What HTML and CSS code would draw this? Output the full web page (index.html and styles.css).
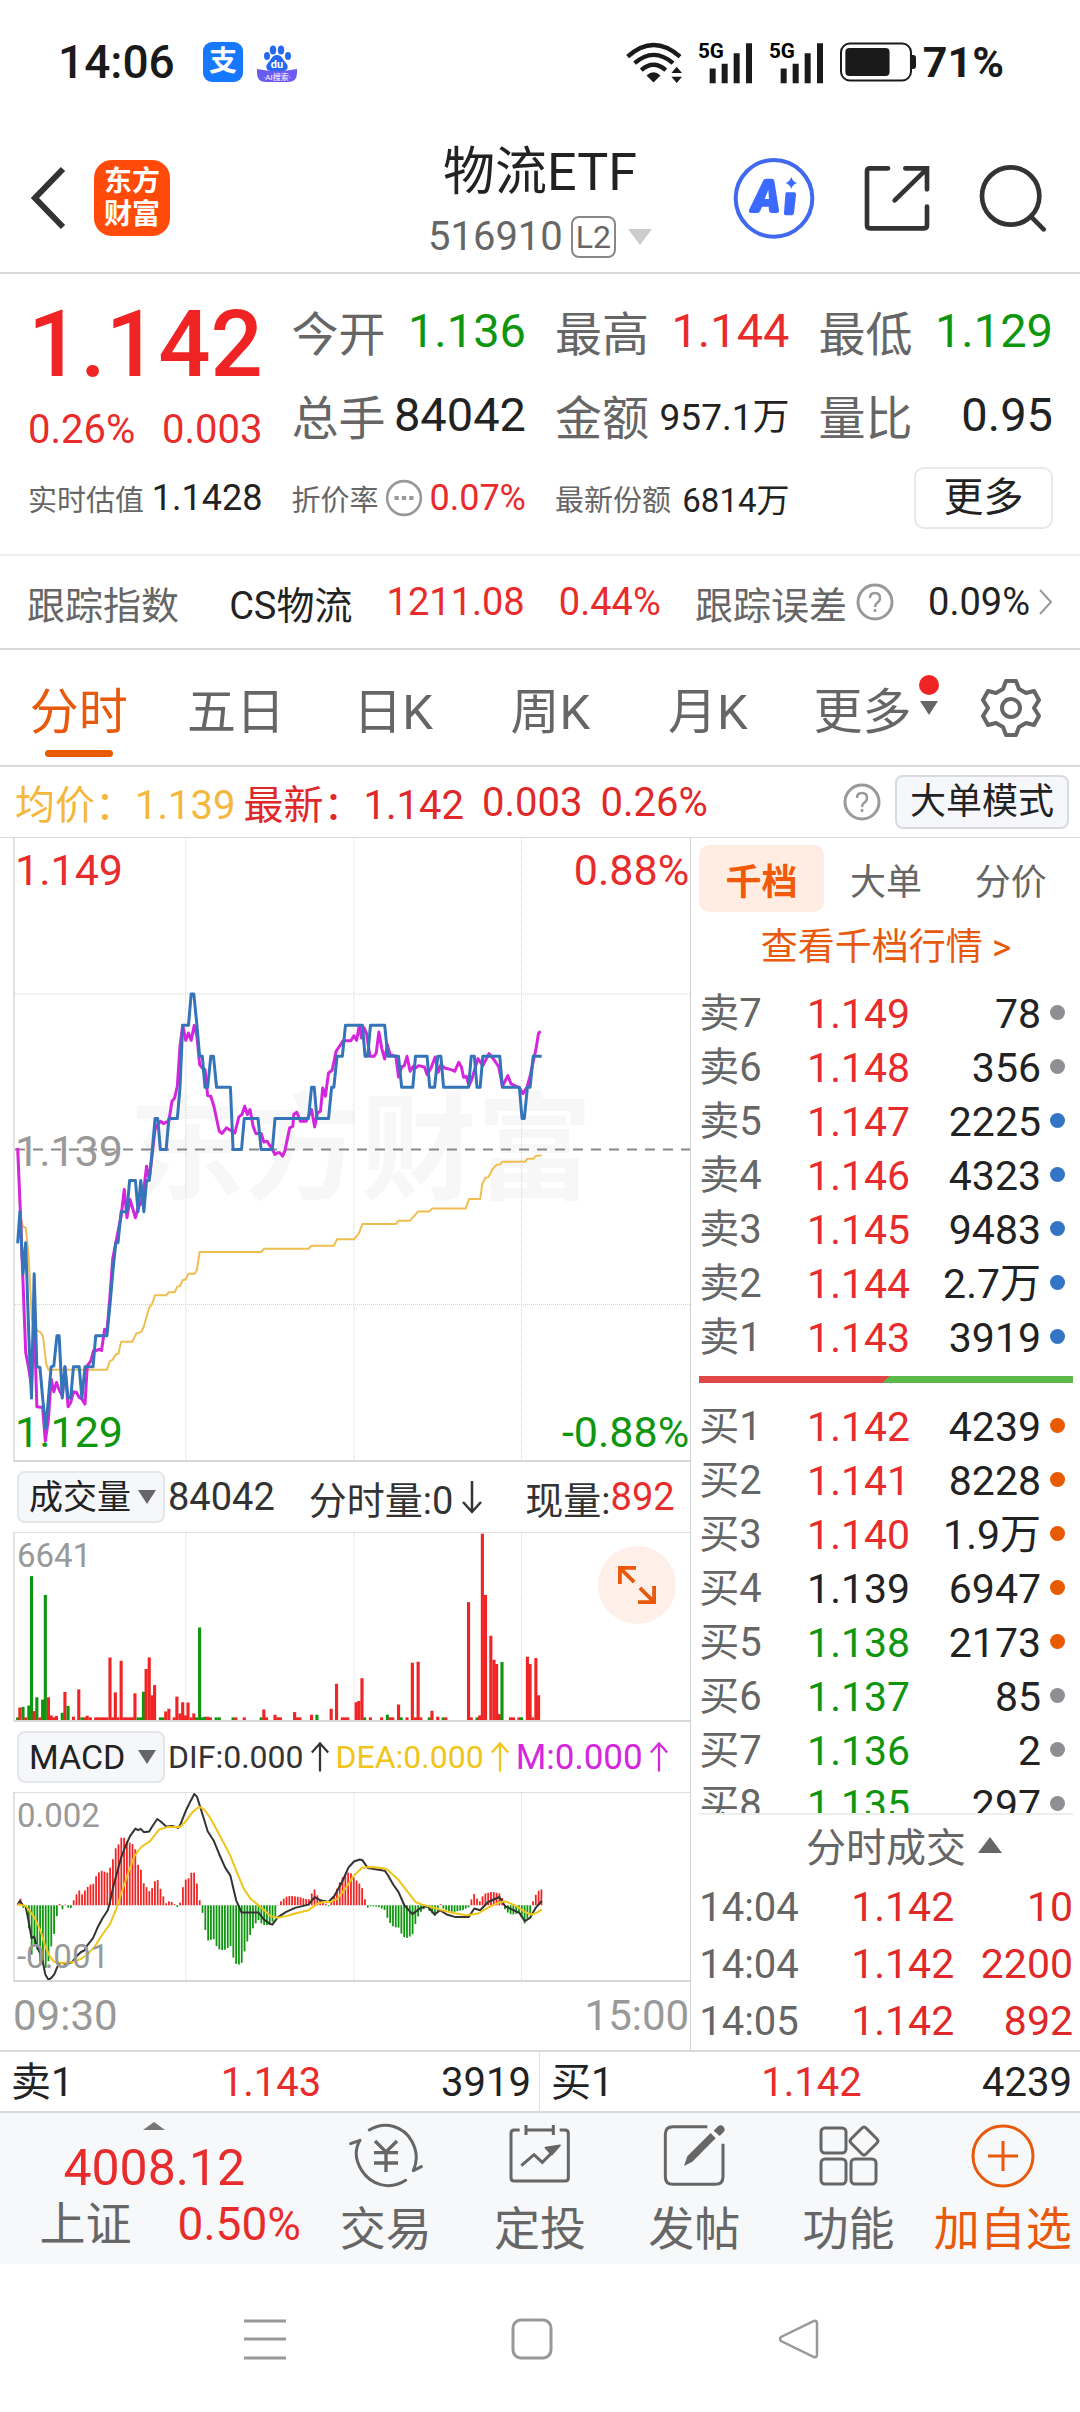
FILE: index.html
```html
<!DOCTYPE html>
<html lang="zh-CN">
<head>
    <meta charset="UTF-8">
    <meta name="viewport" content="width=device-width, initial-scale=1.0">
    <title>物流ETF 516910</title>
    <link rel="stylesheet" href="styles.css">
</head>
<body>
    <div class="status">
        <span class="clock">14:06</span>
        <svg class="app-icon" viewBox="0 0 40 40">
            <rect width="40" height="40" rx="9" fill="#1677ff"/>
            <text x="20" y="29" text-anchor="middle" class="alipay-text">支</text>
        </svg>
        <svg class="app-icon" viewBox="0 0 40 40">
            <g fill="#2468f2">
                <ellipse cx="16" cy="8" rx="3.2" ry="4.5"/>
                <ellipse cx="24" cy="8" rx="3.2" ry="4.5"/>
                <ellipse cx="10" cy="14" rx="3" ry="4"/>
                <ellipse cx="31" cy="14" rx="3" ry="4"/>
                <path d="M20 13c5 0 6 5 9 8s2 8-3 8H14c-5 0-6-5-3-8s4-8 9-8z"/>
            </g>
            <path d="M0 27q20 4 40 0v4q0 9-9 9H9q-9 0-9-9z" fill="#6a5cf0"/>
            <text x="20" y="26" text-anchor="middle" class="du-text">du</text>
            <text x="20" y="38" text-anchor="middle" class="ai-text">·AI搜索·</text>
        </svg>
        <div class="status-right">
            <svg class="wifi" viewBox="40 30 178 128">
                <g fill="none" stroke="#1a1a1a" stroke-width="13">
                    <path d="M48 76Q126 6 206 76"/>
                    <path d="M69 96Q126 46 185 96"/>
                    <path d="M89 117Q126 85 163 117"/>
                </g>
                <path d="M105 133Q126 114 147 133L126 154zM180 126l16-19 16 19zM180 137h32l-16 19z" fill="#1a1a1a"/>
            </svg>
            <svg class="signal" viewBox="260 30 165 128">
                <text x="260" y="80" class="net-text">5G</text>
                <path d="M304 112v44M340 98v58M376 66v90M413 36v120" stroke="#1a1a1a" stroke-width="18"/>
            </svg>
            <svg class="signal" viewBox="260 30 165 128">
                <text x="260" y="80" class="net-text">5G</text>
                <path d="M304 112v44M340 98v58M376 66v90M413 36v120" stroke="#1a1a1a" stroke-width="18"/>
            </svg>
            <svg class="battery" viewBox="692 40 230 118">
                <rect x="695" y="44" width="209" height="110" rx="26" fill="none" stroke="#1a1a1a" stroke-width="6"/>
                <rect x="708" y="57" width="132" height="84" rx="12" fill="#1a1a1a"/>
                <path d="M906 78h5q8 0 8 9v24q0 9-8 9h-5z" fill="#1a1a1a"/>
            </svg>
            <span class="percent">71%</span>
        </div>
    </div>

    <header class="header">
        <div class="header-side">
            <button class="icon-btn" aria-label="返回">
                <svg width="36" height="64" viewBox="0 0 36 64"><path d="M32 3L4 32l28 29" fill="none" stroke="#333" stroke-width="6"/></svg>
            </button>
            <a class="logo" href="#">东方<br>财富</a>
        </div>
        <div class="title">
            <h1>物流ETF</h1>
            <button class="code">516910<span class="level">L2</span><span class="code-arrow"></span></button>
        </div>
        <div class="header-side header-tools">
            <button class="icon-btn" aria-label="AI">
                <svg width="82" height="82" viewBox="372 380 246 246">
                    <circle cx="495" cy="504" r="115" fill="none" stroke="#4069f0" stroke-width="12"/>
                    <path d="M462 452q2-7 10-7h16q7 0 8 7l14 88q1 8-7 8h-15q-7 0-8-7l-1-12h-20l-5 12q-3 7-9 7h-18q-10 0-7-9zM478 479l-11 27h13zM533 486h22q7 0 6 7l-6 55q-1 7-8 7h-16q-7 0-6-7l4-55q0-7 4-7zM547 439q3 15 18 19-15 4-18 18-4-14-18-18 14-4 18-19z" fill="#3a6aff" fill-rule="evenodd"/>
                </svg>
            </button>
            <button class="icon-btn" aria-label="分享">
                <svg width="66" height="66" viewBox="760 404 198 198">
                    <path d="M832 414h-54q-9 0-9 9v162q0 9 9 9h162q9 0 9-9v-56M884 414h65v63M944 420l-92 90" fill="none" stroke="#333" stroke-width="14" stroke-linecap="round"/>
                </svg>
            </button>
            <button class="icon-btn" aria-label="搜索">
                <svg width="68" height="68" viewBox="1108 398 204 204">
                    <circle cx="1203" cy="494" r="86" fill="none" stroke="#333" stroke-width="14"/>
                    <path d="M1264 556l38 38" stroke="#333" stroke-width="14" stroke-linecap="round"/>
                </svg>
            </button>
        </div>
    </header>

    <section class="quote">
        <div class="last">
            <div class="last-price">1.142</div>
            <div class="last-change"><span>0.26%</span><span>0.003</span></div>
        </div>
        <div class="cell"><span class="label">今开</span><span class="down">1.136</span></div>
        <div class="cell"><span class="label">最高</span><span class="up">1.144</span></div>
        <div class="cell"><span class="label">最低</span><span class="down">1.129</span></div>
        <div class="cell"><span class="label">总手</span><span>84042</span></div>
        <div class="cell"><span class="label">金额</span><span class="amount">957.1万</span></div>
        <div class="cell"><span class="label">量比</span><span>0.95</span></div>
        <div class="cell small"><span class="label">实时估值</span><span>1.1428</span></div>
        <div class="cell small">
            <span class="label">折价率</span>
            <svg class="hint" viewBox="0 0 36 36"><circle cx="18" cy="18" r="16" fill="none" stroke="#999" stroke-width="2.5"/><path d="M9 18h4M16 18h4M23 18h4" stroke="#999" stroke-width="4"/></svg>
            <span class="up">0.07%</span>
        </div>
        <div class="cell small"><span class="label">最新份额</span><span class="share">6814万</span></div>
        <div class="cell cell-more"><button class="more-btn">更多</button></div>
    </section>

    <a class="track" href="#">
        <span class="label track-name">跟踪指数</span>
        <span>CS物流</span>
        <span class="up">1211.08</span>
        <span class="up">0.44%</span>
        <span class="label track-label">跟踪误差
            <svg class="hint" viewBox="0 0 38 38"><circle cx="19" cy="19" r="17" fill="none" stroke="#999" stroke-width="3"/><path d="M14 15q0-5 5-5t5 5q0 3-3 5-2 1.500-2 4M19 26v3" fill="none" stroke="#999" stroke-width="2.500"/></svg>
        </span>
        <span class="track-label">0.09%
            <svg width="14" height="26" viewBox="0 0 14 26"><path d="M1 1l11 12L1 25" fill="none" stroke="#999" stroke-width="2"/></svg>
        </span>
    </a>

    <nav class="tabs">
        <button class="tab active">分时</button>
        <button class="tab">五日</button>
        <button class="tab">日K</button>
        <button class="tab">周K</button>
        <button class="tab">月K</button>
        <button class="tab tab-more">更多<span class="tab-arrow"></span></button>
        <button class="tab" aria-label="设置">
            <svg width="60" height="60" viewBox="0 0 60 60">
                <path d="M25 3h10l3 8 7 4 8-2 5 9-5 8 5 8-5 9-8-2-7 4-3 8H25l-3-8-7-4-8 2-5-9 5-8-5-8 5-9 8 2 7-4z" fill="none" stroke="#666" stroke-width="4" stroke-linejoin="round"/>
                <circle cx="30" cy="30" r="9" fill="none" stroke="#666" stroke-width="4"/>
            </svg>
        </button>
    </nav>

    <div class="info">
        <span class="avg">均价：1.139</span>
        <span class="now">最新：1.142</span>
        <span class="now-change">0.003</span>
        <span class="now-change">0.26%</span>
        <svg class="hint info-hint" viewBox="0 0 38 38"><circle cx="19" cy="19" r="17" fill="none" stroke="#999" stroke-width="3"/><path d="M14 15q0-5 5-5t5 5q0 3-3 5-2 1.500-2 4M19 26v3" fill="none" stroke="#999" stroke-width="2.500"/></svg>
        <button class="mode-btn">大单模式</button>
    </div>

    <main class="main">
        <section class="charts">
            <div class="chart chart-price">
                <span class="watermark">东方财富</span>
                <svg viewBox="32 54 1514 1869" preserveAspectRatio="none">
                    <path class="grid" d="M415 54v1869M792 54v1869M1168 54v1869M32 523h1514M32 1456h1514"/>
                    <path class="middle" d="M32 990h1514"/>
                    <polyline class="line avg-line" points="38,990 44,1190 50,1222 56,1225 62,1300 70,1500 81,1533 90,1540 95,1552 102,1635 107,1652 238,1652 245,1625 251,1622 258,1606 264,1604 270,1568 295,1568 304,1543 315,1538 320,1525 333,1465 339,1455 346,1428 371,1428 377,1419 390,1419 396,1402 402,1400 408,1383 415,1380 421,1363 435,1363 440,1352 446,1298 584,1298 591,1288 690,1288 697,1279 747,1279 754,1260 792,1260 803,1242 811,1214 886,1214 892,1204 918,1204 936,1176 961,1176 968,1167 1043,1167 1050,1139 1075,1139 1080,1092 1087,1075 1094,1073 1102,1050 1112,1036 1119,1035 1125,1027 1175,1027 1181,1018 1194,1018 1200,1009 1213,1008"/>
                    <polyline class="line index-line" points="38,985 44,1177 50,1390 56,1600 62,1643 69,1700 75,1490 81,1763 94,1765 100,1866 107,1800 113,1680 119,1718 125,1690 132,1715 138,1730 144,1643 151,1763 157,1750 163,1718 170,1720 176,1735 182,1740 189,1755 194,1640 202,1625 208,1595 214,1595 220,1590 226,1594 233,1530 238,1540 245,1430 251,1320 258,1270 264,1230 270,1190 277,1110 283,1195 290,1140 302,1195 308,1165 315,1150 321,1110 327,1040 333,1080 340,1000 346,930 352,915 358,905 365,912 371,908 377,905 384,845 390,835 396,800 402,680 408,617 415,662 421,640 427,662 434,617 440,650 446,735 452,745 458,750 464,828 471,830 478,860 490,935 496,942 506,925 515,932 525,940 534,892 541,885 547,860 553,885 559,870 566,920 572,942 584,942 590,968 597,965 609,990 615,1005 620,1000 626,1000 632,1010 637,995 648,925 655,920 657,885 664,878 672,905 685,905 697,870 704,922 710,880 717,875 722,805 728,830 735,760 743,752 752,695 768,663 785,663 792,648 798,662 804,617 809,655 815,625 820,640 828,710 837,710 842,700 848,637 855,690 861,718 867,675 873,705 886,710 892,772 899,742 905,738 911,710 918,755 925,740 931,745 937,738 950,742 956,765 965,745 974,712 981,758 987,735 995,745 1010,750 1018,755 1027,728 1033,742 1038,773 1044,770 1050,798 1056,780 1066,735 1070,717 1081,738 1095,702 1107,722 1117,742 1125,800 1137,768 1144,792 1156,800 1163,805 1171,822 1180,803 1187,770 1194,725 1200,690 1206,640 1211,635"/>
                    <polyline class="line price-line" points="38,1272 43,1177 50,1363 56,1270 63,1550 69,1737 75,1363 81,1643 88,1645 94,1737 101,1828 107,1737 113,1643 119,1640 126,1550 131,1550 138,1737 144,1643 151,1737 157,1737 163,1643 176,1643 182,1737 189,1643 207,1643 213,1550 238,1550 245,1457 251,1363 258,1270 263,1270 270,1177 283,1177 289,1083 302,1083 308,1177 314,1083 321,1177 327,1083 333,1083 340,990 346,897 352,897 358,990 371,990 377,897 396,897 402,803 408,617 421,617 427,523 433,523 440,617 446,710 452,710 458,803 464,803 471,710 477,710 484,803 515,803 521,990 540,990 546,897 577,897 584,990 609,990 615,897 690,897 697,803 703,803 709,897 735,897 742,803 747,803 754,710 766,710 773,617 811,617 817,710 823,710 829,617 861,617 868,710 892,710 899,803 924,803 930,710 956,710 962,803 973,803 980,710 987,710 993,803 1049,803 1055,710 1062,710 1068,803 1075,803 1081,710 1119,710 1125,803 1163,803 1169,897 1174,897 1181,803 1187,803 1194,710 1213,710"/>
                </svg>
                <div class="axis">
                    <div class="axis-row up"><span>1.149</span><span>0.88%</span></div>
                    <div class="axis-row mid"><span>1.139</span></div>
                    <div class="axis-row down"><span>1.129</span><span>-0.88%</span></div>
                </div>
            </div>

            <div class="indicator">
                <span class="picker">
                    <select aria-label="指标一"><option>成交量</option></select>
                </span>
                <span>84042</span>
                <span class="minute">分时量:0<svg class="arrow" viewBox="0 0 22 34"><path d="M11 1v30M2 22l9 10 9-10" fill="none" stroke="#333" stroke-width="2.500"/></svg></span>
                <span class="current">现量:<b class="up">892</b></span>
            </div>
            <div class="chart chart-sub">
                <svg viewBox="32 244 1514 568" preserveAspectRatio="none">
                    <path class="grid" d="M415 244v568M792 244v568M1168 244v568"/>
                    <g id="volume"></g>
                </svg>
                <div class="axis axis-sub"><span>6641</span></div>
                <button class="expand" aria-label="全屏">
                    <svg width="38" height="38" viewBox="0 0 40 40"><path d="M2 19V2h17M3 3l14 14M38 21v17H21M37 37L23 23" fill="none" stroke="#e8590c" stroke-width="4"/></svg>
                </button>
            </div>

            <div class="indicator macd">
                <span class="picker">
                    <select aria-label="指标二"><option>MACD</option></select>
                </span>
                <span>DIF:0.000<svg class="arrow" viewBox="0 0 22 34"><path d="M11 33V3M2 12l9-10 9 10" fill="none" stroke="#333" stroke-width="2.500"/></svg></span>
                <span class="dea">DEA:0.000<svg class="arrow" viewBox="0 0 22 34"><path d="M11 33V3M2 12l9-10 9 10" fill="none" stroke="#f0c419" stroke-width="2.500"/></svg></span>
                <span class="m">M:0.000<svg class="arrow" viewBox="0 0 22 34"><path d="M11 33V3M2 12l9-10 9 10" fill="none" stroke="#d426dc" stroke-width="2.500"/></svg></span>
            </div>
            <div class="chart chart-sub">
                <svg viewBox="32 214 1514 568" preserveAspectRatio="none">
                    <path class="grid" d="M415 214v568M792 214v568M1168 214v568"/>
                    <g id="macd"></g>
                    <polyline class="line thin dif-line" points="38,552 43,542 50,555 56,560 62,600 69,655 75,650 81,680 88,700 94,725 100,765 107,781 113,776 120,765 126,745 132,732 138,730 144,733 151,732 160,728 170,710 180,697 188,692 195,675 207,655 218,620 228,595 240,570 245,545 252,500 262,450 270,410 280,375 290,345 302,322 308,327 314,323 321,333 333,331 340,315 351,293 358,300 371,316 385,314 398,320 402,312 415,268 427,235 434,217 440,225 447,255 455,290 464,330 478,360 490,400 503,440 515,465 521,500 528,540 540,577 578,577 590,598 602,610 609,614 621,592 640,575 660,563 690,553 704,530 717,540 735,545 748,527 765,485 780,440 792,422 805,416 811,418 823,442 861,450 868,463 880,492 892,515 905,555 923,582 940,565 956,557 973,583 985,570 1000,583 1020,591 1049,591 1062,565 1075,570 1093,545 1118,530 1131,558 1163,578 1175,603 1187,593 1200,562 1213,542"/>
                    <polyline class="line thin dea-line" points="38,552 56,557 75,590 90,635 100,680 110,710 120,727 135,730 160,728 180,718 195,703 210,682 225,650 245,612 258,570 270,520 285,460 300,405 315,378 335,360 355,325 375,317 402,317 415,300 430,272 445,256 455,262 470,290 490,340 515,405 528,450 545,505 560,535 585,563 605,588 621,593 640,588 660,580 690,570 710,550 725,545 740,545 755,535 775,500 792,465 810,441 830,439 850,441 865,445 890,475 910,510 930,545 945,553 970,562 990,570 1020,580 1045,585 1070,580 1093,562 1115,548 1131,543 1155,556 1175,575 1190,583 1202,578 1213,567"/>
                </svg>
                <div class="axis axis-sub"><span>0.002</span><span>-0.001</span></div>
            </div>
            <div class="times"><span>09:30</span><span>15:00</span></div>
        </section>

        <aside class="book">
            <div class="book-tabs">
                <button class="book-tab active">千档</button>
                <button class="book-tab">大单</button>
                <button class="book-tab">分价</button>
            </div>
            <a class="book-link" href="#">查看千档行情 &gt;</a>
            <table class="levels">
                <tr><th>卖7</th><td class="up">1.149</td><td>78</td><td class="dot gray"></td></tr>
                <tr><th>卖6</th><td class="up">1.148</td><td>356</td><td class="dot gray"></td></tr>
                <tr><th>卖5</th><td class="up">1.147</td><td>2225</td><td class="dot blue"></td></tr>
                <tr><th>卖4</th><td class="up">1.146</td><td>4323</td><td class="dot blue"></td></tr>
                <tr><th>卖3</th><td class="up">1.145</td><td>9483</td><td class="dot blue"></td></tr>
                <tr><th>卖2</th><td class="up">1.144</td><td>2.7万</td><td class="dot blue"></td></tr>
                <tr><th>卖1</th><td class="up">1.143</td><td>3919</td><td class="dot blue"></td></tr>
            </table>
            <div class="ratio"></div>
            <div class="buys">
                <table class="levels">
                    <tr><th>买1</th><td class="up">1.142</td><td>4239</td><td class="dot orange"></td></tr>
                    <tr><th>买2</th><td class="up">1.141</td><td>8228</td><td class="dot orange"></td></tr>
                    <tr><th>买3</th><td class="up">1.140</td><td>1.9万</td><td class="dot orange"></td></tr>
                    <tr><th>买4</th><td>1.139</td><td>6947</td><td class="dot orange"></td></tr>
                    <tr><th>买5</th><td class="down">1.138</td><td>2173</td><td class="dot orange"></td></tr>
                    <tr><th>买6</th><td class="down">1.137</td><td>85</td><td class="dot gray"></td></tr>
                    <tr><th>买7</th><td class="down">1.136</td><td>2</td><td class="dot gray"></td></tr>
                    <tr><th>买8</th><td class="down">1.135</td><td>297</td><td class="dot gray"></td></tr>
                </table>
            </div>
            <button class="trades-title">分时成交<span class="trades-arrow"></span></button>
            <table class="trades">
                <tr><th>14:04</th><td class="trade-price">1.142</td><td>10</td></tr>
                <tr><th>14:04</th><td class="trade-price">1.142</td><td>2200</td></tr>
                <tr><th>14:05</th><td class="trade-price">1.142</td><td>892</td></tr>
            </table>
        </aside>
    </main>

    <div class="best">
        <div class="best-side"><span>卖1</span><span class="up">1.143</span><span>3919</span></div>
        <div class="best-side"><span>买1</span><span class="up">1.142</span><span>4239</span></div>
    </div>

    <footer class="toolbar">
        <button class="index">
            <span class="index-arrow"></span>
            <span class="index-value">4008.12</span>
            <span class="index-row"><span class="label">上证</span><span>0.50%</span></span>
        </button>
        <button class="tool">
            <svg width="74" height="68" viewBox="60 33 222 204">
                <g fill="none" stroke="#666" stroke-width="9" stroke-linecap="round">
                    <path d="M121 57C170 27 225 48 248 90q25 45 5 89M253 179l24-12M230 208C180 240 125 220 98 178Q68 130 93 88M93 88l-28 10"/>
                </g>
                <path d="M138 90l33 33 33-33M171 123v60M135 125h72M135 156h72" fill="none" stroke="#666" stroke-width="10"/>
            </svg>
            <span>交易</span>
        </button>
        <button class="tool">
            <svg width="74" height="68" viewBox="521 33 222 204">
                <path d="M571 57h-16q-10 0-10 10v133q0 10 10 10h152q10 0 10-10V67q0-10-10-10h-16M590 42v30M672 42v30M590 57h82M576 164l38-33 25 23 38-38" fill="none" stroke="#666" stroke-width="9"/>
                <path d="M648 110l44-7-25 28z" fill="#666" stroke="#666" stroke-width="5" stroke-linejoin="round"/>
            </svg>
            <span>定投</span>
        </button>
        <button class="tool">
            <svg width="74" height="68" viewBox="982 33 222 204">
                <path d="M1133 47h-103q-23 0-23 23v127q0 23 23 23h127q23 0 23-23V98" fill="none" stroke="#666" stroke-width="9"/>
                <path d="M1063 165l10-29 70-70 15 16-70 70zM1152 59l13-13q8-6 15 0t4 15l-14 14z" fill="#666"/>
            </svg>
            <span>发帖</span>
        </button>
        <button class="tool">
            <svg width="74" height="68" viewBox="0 0 74 68">
                <g fill="none" stroke="#666" stroke-width="3">
                    <rect x="9" y="6" width="25" height="25" rx="4"/>
                    <rect x="9" y="37" width="25" height="25" rx="4"/>
                    <rect x="39" y="37" width="25" height="25" rx="4"/>
                    <path d="M50 6q2-2 4 0l11 11q2 2 0 4L54 32q-2 2-4 0L39 21q-2-2 0-4z"/>
                </g>
            </svg>
            <span>功能</span>
        </button>
        <button class="tool add">
            <svg width="74" height="68" viewBox="0 0 74 68">
                <circle cx="37" cy="34" r="30" fill="none" stroke="#e8590c" stroke-width="3"/>
                <path d="M37 19v30M22 34h30" stroke="#e8590c" stroke-width="3"/>
            </svg>
            <span>加自选</span>
        </button>
    </footer>

    <nav class="system-nav">
        <button class="icon-btn" aria-label="最近任务"><svg width="42" height="42" viewBox="0 0 42 42"><path d="M0 3h42M0 21h42M0 40h42" stroke="#999" stroke-width="3"/></svg></button>
        <button class="icon-btn" aria-label="主屏幕"><svg width="42" height="42" viewBox="0 0 42 42"><rect x="2" y="2" width="38" height="38" rx="8" fill="none" stroke="#999" stroke-width="3"/></svg></button>
        <button class="icon-btn" aria-label="返回"><svg width="42" height="42" viewBox="0 0 42 42"><path d="M36 3q3-1 3 3v30q0 4-3 3L3 23q-2-2 0-4z" fill="none" stroke="#999" stroke-width="2.500"/></svg></button>
    </nav>

    <script>
        const RED = '#f02424';
        const GREEN = '#0f960f';

        function drawBar(group, x, y, width, height, color) {
            const rect = document.createElementNS('http://www.w3.org/2000/svg', 'rect');
            rect.setAttribute('x', x - width / 2);
            rect.setAttribute('y', y);
            rect.setAttribute('width', width);
            rect.setAttribute('height', height);
            rect.setAttribute('fill', color);
            group.appendChild(rect);
        }

        // volume: x position and height, negative means a falling minute
        const volume = [
            [38, -8], [43, 38], [50, -40], [56, 8], [63, -44], [69, -437], [75, 27], [81, -69], [88, 8], [94, -62], [100, -380],
            [107, 69], [113, 14], [119, 8], [125, 12], [138, -22], [144, 85], [151, -43], [163, 10], [175, 93], [182, -8],
            [188, 8], [194, 13], [201, 8], [213, 8], [219, 8], [226, 8], [232, 8], [238, 8], [245, 190], [251, 8], [257, 84],
            [263, 8], [270, 180], [276, 8], [282, 8], [289, 8], [295, 8], [301, 81], [308, -8], [314, -8], [320, -86],
            [326, 155], [333, 190], [339, 75], [345, 106], [358, -8], [364, -8], [370, 26], [377, 34], [389, 8], [395, 71],
            [402, 20], [408, 54], [414, 14], [420, 53], [427, 8], [433, 20], [439, -8], [446, -281], [452, -8], [458, -10],
            [464, 10], [470, 8], [483, -8], [490, -8], [521, -8], [527, 8], [546, 8], [584, -8], [590, 32], [596, 8],
            [615, 16], [621, 8], [627, 8], [659, 24], [665, 8], [671, 8], [697, 16], [709, -16], [741, 34], [753, 110],
            [766, 8], [772, 8], [778, 8], [797, 54], [803, 58], [810, 127], [816, -8], [829, 8], [854, 8], [867, -16],
            [873, 8], [879, 8], [892, 47], [898, -8], [911, 8], [923, 174], [930, 8], [936, 177], [942, 8], [961, -8],
            [967, 28], [980, 10], [992, -8], [998, 8], [1049, 358], [1055, 8], [1068, -8], [1074, 14], [1080, 566],
            [1087, 380], [1099, 256], [1106, 183], [1112, 170], [1118, 18], [1124, -176], [1143, 8], [1150, 8], [1162, 8],
            [1168, -8], [1181, 192], [1187, 170], [1193, 8], [1200, 188], [1206, 75]
        ];
        const volumeGroup = document.getElementById('volume');
        volume.forEach(([x, v]) => drawBar(volumeGroup, x, 812 - Math.abs(v), 7, Math.abs(v), v > 0 ? RED : GREEN));

        // macd histogram, one value per minute
        const macd = [
            3, 20, -8, -14, -70, -150, -120, -135, -170, -180, -190, -170, -125, -87, -33, 4, -12, 2, -7, -8,
            15, 33, 45, 33, 45, 56, 63, 65, 88, 100, 105, 102, 99, 114, 140, 173, 185, 205, 205, 195,
            190, 186, 170, 123, 108, 67, 55, 43, 52, 73, 77, 50, 27, 6, 12, 10, 3, -5, 8, 55,
            78, 82, 99, 99, 66, 15, -23, -75, -107, -105, -103, -124, -134, -136, -135, -130, -124, -159, -178, -180,
            -175, -140, -110, -90, -70, -55, -45, -55, -60, -60, -60, -50, -37, -1, 12, 20, 26, 28, 28, 27,
            26, 24, 21, 19, 18, 36, 48, 30, 16, 10, 5, -3, 10, 28, 50, 70, 85, 95, 99, 97,
            85, 75, 66, 52, 18, -7, -3, -3, -4, -6, -10, -14, -38, -54, -64, -67, -68, -86, -97, -99,
            -95, -88, -57, -34, -20, -12, -8, -17, -24, -32, -20, 3, -10, -14, -18, -20, -20, -18, -16, -14,
            -10, -6, 18, 34, 20, 12, 27, 36, 38, 40, 40, 38, 36, 22, -12, -22, -27, -28, -26, -24,
            -38, -55, -40, -24, 12, 32, 44, 48
        ];
        const macdGroup = document.getElementById('macd');
        macd.forEach((v, i) => drawBar(macdGroup, 38 + i * 6.28, v > 0 ? 555 - v : 555, 4, Math.abs(v), v > 0 ? RED : GREEN));
    </script>
</body>
</html>
```

FILE: styles.css
```css
* {
    box-sizing: border-box;
}
body {
    margin: 0;
    background: #fff;
    color: #222;
    font-family: Roboto, "Noto Sans CJK SC", sans-serif;
    font-size: 40px;
}
svg {
    display: block;
    flex-shrink: 0;
}
button, select {
    margin: 0;
    padding: 0;
    border: none;
    background: none;
    color: inherit;
    font: inherit;
    cursor: pointer;
}
a {
    color: inherit;
    text-decoration: none;
}
table {
    width: 100%;
    border-collapse: collapse;
}
th, td {
    padding: 0;
    font-weight: normal;
}
.up {
    color: #e82c2c;
}
.down {
    color: #0f960f;
}
.label {
    color: #666;
}
.hint {
    width: 38px;
    height: 38px;
}

/* status bar */
.status {
    display: flex;
    align-items: center;
    height: 124px;
    padding: 0 76px 0 58px;
    color: #1a1a1a;
}
.clock {
    margin-right: 28px;
    font-size: 46px;
    font-weight: 500;
}
.app-icon {
    width: 40px;
    height: 40px;
    margin-right: 14px;
}
.alipay-text {
    fill: #fff;
    font-size: 28px;
    font-weight: bold;
}
.du-text {
    fill: #fff;
    font-size: 11px;
    font-weight: bold;
}
.ai-text {
    fill: #fff;
    font-size: 8px;
}
.status-right {
    display: flex;
    align-items: center;
    margin-left: auto;
}
.wifi {
    width: 59px;
    height: 43px;
    margin-right: 14px;
}
.signal {
    width: 55px;
    height: 43px;
    margin-right: 16px;
    overflow: visible;
}
.net-text {
    font-size: 62px;
    font-weight: bold;
}
.battery {
    width: 77px;
    height: 40px;
    margin-right: 6px;
}
.percent {
    font-size: 43px;
    font-weight: bold;
}

/* header */
.header {
    display: grid;
    grid-template-columns: 1fr auto 1fr;
    align-items: center;
    height: 150px;
    border-bottom: 2px solid #d8dade;
}
.header-side {
    display: flex;
    align-items: center;
    gap: 27px;
    padding-left: 31px;
}
.header-tools {
    justify-content: flex-end;
    gap: 49px;
    padding: 0 33px 0 0;
}
.logo {
    width: 76px;
    height: 76px;
    padding-top: 5px;
    border-radius: 18px;
    background: #ff4a0a;
    color: #fff;
    font-size: 28px;
    font-weight: bold;
    line-height: 33px;
    text-align: center;
}
.title {
    display: flex;
    flex-direction: column;
    align-items: center;
    padding-top: 12px;
}
.title h1 {
    margin: 0;
    font-size: 52px;
    font-weight: normal;
    line-height: 66px;
}
.code {
    display: flex;
    align-items: center;
    height: 62px;
    color: #666;
    line-height: 40px;
}
.level {
    height: 42px;
    margin-left: 8px;
    padding: 0 3px;
    border: 2px solid #888;
    border-radius: 8px;
    font-size: 32px;
    line-height: 38px;
}
.code-arrow {
    margin-left: 12px;
    border: 12px solid transparent;
    border-top: 16px solid #ccc;
    border-bottom: none;
}

/* quote */
.quote {
    display: grid;
    grid-template-columns: repeat(4, minmax(0, 1fr));
    grid-auto-rows: 84px;
    column-gap: 29px;
    padding: 14px 27px 14px 28px;
    border-bottom: 2px solid #ededed;
}
.last {
    grid-row: span 2;
    color: #f02424;
}
.last-price {
    font-size: 92px;
    font-weight: 500;
    line-height: 114px;
}
.last-change {
    display: flex;
    justify-content: space-between;
    line-height: 56px;
    color: #e82c2c;
}
.cell {
    display: flex;
    align-items: center;
    justify-content: space-between;
    font-size: 47px;
    white-space: nowrap;
}
.amount {
    font-size: 37px;
}
.small {
    font-size: 36px;
}
.small .label {
    font-size: 29px;
}
.share {
    font-size: 33px;
}
.cell-more {
    justify-content: flex-end;
}
.more-btn {
    width: 139px;
    height: 62px;
    border: 2px solid #e8e8e8;
    border-radius: 10px;
    font-size: 40px;
    line-height: 56px;
}

.track {
    display: flex;
    align-items: center;
    justify-content: space-between;
    height: 94px;
    padding: 0 27px;
    border-bottom: 2px solid #d8dade;
    font-size: 38px;
}
.track-name {
    margin-right: 16px;
}
.track-label {
    display: flex;
    align-items: center;
    gap: 9px;
}

/* period tabs */
.tabs {
    display: grid;
    grid-template-columns: repeat(5, 15fr) 18fr 10fr;
    height: 117px;
    border-bottom: 2px solid #d8dade;
}
.tab {
    position: relative;
    display: flex;
    align-items: center;
    justify-content: center;
    color: #666;
    font-size: 49px;
}
.tab.active {
    color: #e8590c;
}
.tab.active::after {
    content: "";
    position: absolute;
    bottom: 8px;
    width: 68px;
    height: 7px;
    border-radius: 4px;
    background: #e85a00;
}
.tab:last-child {
    justify-content: flex-start;
    padding-left: 6px;
}
.tab-more {
    justify-content: flex-start;
    padding-left: 27px;
}
.tab-arrow {
    position: relative;
    margin-left: 9px;
    border: 9px solid transparent;
    border-top: 14px solid #666;
    border-bottom: none;
}
.tab-arrow::before {
    content: "";
    position: absolute;
    left: -10px;
    bottom: 20px;
    width: 20px;
    height: 20px;
    border-radius: 50%;
    background: #f02424;
}

.info {
    display: flex;
    align-items: center;
    height: 71px;
    padding: 0 11px 0 15px;
    border-bottom: 1px solid #d8dade;
    color: #e02828;
}
.avg {
    margin-right: 8px;
    color: #f5b83d;
}
.now-change {
    margin-left: 18px;
}
.info-hint {
    margin-left: auto;
}
.mode-btn {
    width: 174px;
    height: 54px;
    margin-left: 14px;
    border: 2px solid #d8dade;
    border-radius: 8px;
    background: #f6f7fa;
    color: #222;
    font-size: 36px;
    line-height: 48px;
}

/* charts */
.main {
    display: grid;
    grid-template-columns: 16fr 9fr;
    border-bottom: 2px solid #d8dade;
}
.charts {
    min-width: 0;
    padding-left: 13px;
    border-right: 1px solid #d0d0d0;
}
.chart {
    position: relative;
    border-left: 2px solid #e2e2e2;
    border-bottom: 2px solid #d8d8d8;
}
.chart > svg {
    position: relative;
    width: 100%;
    height: 100%;
}
.chart-price {
    height: 624px;
}
.chart-sub {
    height: 190px;
    border-top: 1px solid #dedede;
}
.watermark {
    position: absolute;
    inset: 0;
    padding-left: 16px;
    color: #f7f7f7;
    font-size: 116px;
    font-weight: bold;
    line-height: 624px;
    text-align: center;
}
.grid, .middle, .line {
    fill: none;
    vector-effect: non-scaling-stroke;
}
.grid {
    stroke: #d4d4d4;
    stroke-dasharray: 1 1;
}
.middle {
    stroke: #888;
    stroke-width: 2;
    stroke-dasharray: 10 8;
}
.line {
    stroke-width: 3;
    stroke-linejoin: round;
}
.line.thin {
    stroke-width: 2;
}
.avg-line {
    stroke: #f0be50;
    stroke-width: 2;
}
.index-line {
    stroke: #d426dc;
}
.price-line {
    stroke: #3474b8;
}
.dif-line {
    stroke: #333;
}
.dea-line {
    stroke: #f0c419;
}
.axis {
    position: absolute;
    inset: 0;
    display: flex;
    flex-direction: column;
    justify-content: space-between;
    padding: 5px 1px 1px 0;
    font-size: 43px;
    line-height: 54px;
    pointer-events: none;
}
.axis-row {
    display: flex;
    justify-content: space-between;
}
.mid, .times {
    color: #999;
}
.axis-sub {
    padding: 3px 2px;
    color: #999;
    font-size: 33px;
    line-height: 40px;
}
.expand {
    position: absolute;
    top: 13px;
    right: 14px;
    display: flex;
    align-items: center;
    justify-content: center;
    width: 78px;
    height: 78px;
    border-radius: 50%;
    background: #fef0e8;
}
.indicator {
    display: flex;
    align-items: center;
    height: 70px;
    padding-left: 4px;
    color: #333;
    font-size: 38px;
    white-space: nowrap;
}
.indicator > span {
    display: flex;
    align-items: center;
}
.indicator b {
    font-weight: normal;
}
.picker {
    position: relative;
    margin-right: 3px;
}
.picker::after {
    content: "";
    position: absolute;
    right: 9px;
    border: 9px solid transparent;
    border-top: 14px solid #666;
    border-bottom: none;
    pointer-events: none;
}
.picker select {
    appearance: none;
    width: 148px;
    height: 52px;
    padding-left: 10px;
    border: 2px solid #e4e6ea;
    border-radius: 8px;
    background: #f6f7fa;
    color: #222;
    font-size: 34px;
}
.arrow {
    width: 22px;
    height: 34px;
    margin-left: 8px;
}
.minute {
    margin-left: 34px;
}
.current {
    margin-left: 42px;
}
.macd {
    font-size: 32px;
}
.macd .arrow {
    width: 20px;
    margin-left: 6px;
}
.dea {
    margin-left: 6px;
    color: #f0c419;
}
.m {
    margin-left: 6px;
    color: #d426dc;
    font-size: 35px;
}
.times {
    display: flex;
    justify-content: space-between;
    padding-right: 1px;
    font-size: 42px;
    line-height: 68px;
}

/* order book */
.book {
    padding: 7px 7px 0 8px;
}
.book-tabs {
    display: grid;
    grid-template-columns: repeat(3, 1fr);
    height: 67px;
    font-size: 36px;
}
.book-tab {
    color: #666;
}
.book-tab.active {
    border-radius: 10px;
    background: #ffece3;
    color: #f25a0a;
    font-weight: bold;
}
.book-link {
    display: block;
    margin-bottom: 4px;
    color: #e8590c;
    font-size: 37px;
    line-height: 71px;
    text-align: center;
}
.levels, .trades {
    table-layout: fixed;
    font-size: 41px;
}
.levels tr {
    height: 54px;
    line-height: 54px;
}
.levels th {
    width: 80px;
    color: #666;
    font-size: 40px;
    text-align: left;
}
.levels td {
    text-align: right;
}
.levels .dot {
    width: 32px;
}
.dot::before {
    content: "";
    display: block;
    width: 15px;
    height: 15px;
    margin: 0 auto 4px;
    border-radius: 50%;
    background: currentColor;
}
.gray {
    color: #8e8e93;
}
.blue {
    color: #3474c4;
}
.orange {
    color: #e85a00;
}
.ratio {
    height: 7px;
    margin: 11px 0 17px;
    background: linear-gradient(135deg, #e04848 50%, #5cb848 50%);
}
.buys {
    height: 413px;
    overflow: hidden;
}
.trades-title {
    display: flex;
    align-items: center;
    justify-content: center;
    width: 100%;
    height: 66px;
    padding: 0 0 4px 36px;
    border-top: 2px solid #ededed;
    color: #666;
}
.trades-arrow {
    margin-left: 12px;
    border: 12px solid transparent;
    border-bottom: 16px solid #666;
    border-top: none;
}
.trades tr {
    height: 57px;
    line-height: 57px;
}
.trades th {
    width: 120px;
    color: #666;
    font-size: 40px;
    text-align: left;
}
.trades td {
    color: #e02828;
    text-align: right;
}
.trades .trade-price {
    width: 135px;
}

/* best bid and ask */
.best {
    display: grid;
    grid-template-columns: 1fr 1fr;
    border-bottom: 2px solid #d8dade;
}
.best-side {
    display: grid;
    grid-template-columns: 1fr auto 1fr;
    align-items: center;
    height: 59px;
    padding: 2px 8px 0 11px;
    line-height: 56px;
}
.best-side:first-child {
    border-right: 1px solid #e2e2e2;
}
.best-side span:last-child {
    text-align: right;
}

/* bottom toolbar */
.toolbar {
    display: grid;
    grid-template-columns: 2fr repeat(5, 1fr);
    height: 151px;
    background: #f7f8fa;
    color: #666;
    font-size: 46px;
}
.index {
    display: flex;
    flex-direction: column;
    align-items: center;
    padding-top: 9px;
    color: #e82c2c;
}
.index-arrow {
    border: 11px solid transparent;
    border-bottom: 8px solid #777;
    border-top: none;
}
.index-value {
    font-size: 50px;
    line-height: 76px;
}
.index-row {
    display: flex;
    gap: 46px;
    padding-left: 32px;
    line-height: 36px;
}
.tool {
    display: flex;
    flex-direction: column;
    align-items: center;
    padding-top: 9px;
    line-height: 78px;
    white-space: nowrap;
}
.add {
    color: #e8590c;
}

.system-nav {
    display: flex;
    align-items: center;
    justify-content: center;
    gap: 225px;
    height: 149px;
    padding-right: 16px;
}
```
